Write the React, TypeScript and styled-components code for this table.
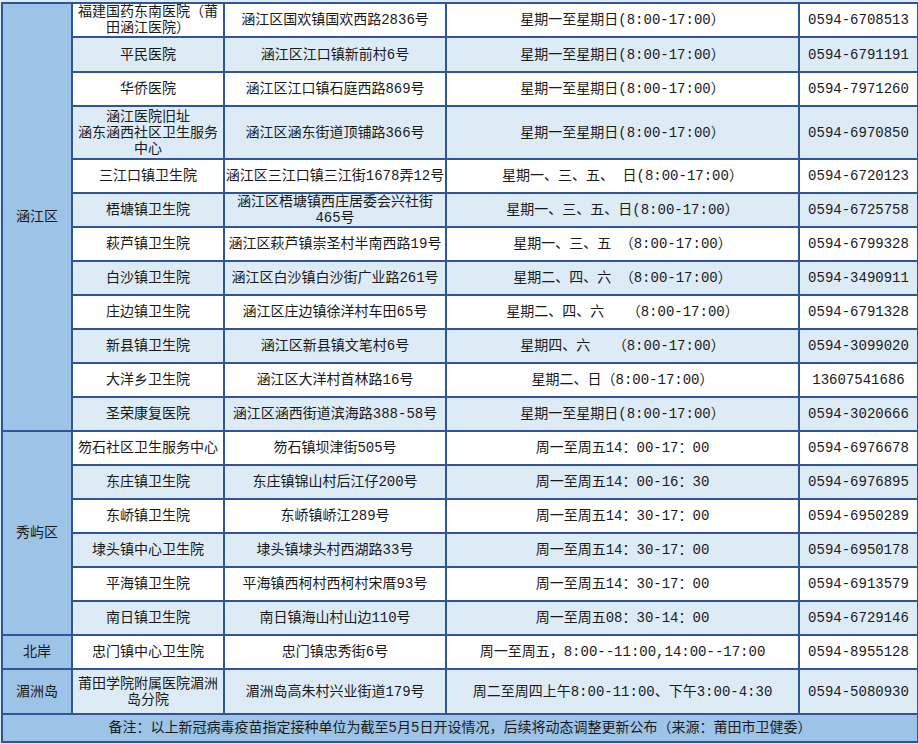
import React from "react";
import styled, { createGlobalStyle } from "styled-components";

interface Site {
  name: React.ReactNode;
  address: React.ReactNode;
  hours: string;
  phone: string;
  h?: number;
}

interface District {
  name: string;
  sites: Site[];
}

const DAILY = "星期一至星期日(8:00-17:00）";

const COLUMNS = [70, 152, 222, 353, 119];

const DISTRICTS: District[] = [
  {
    name: "涵江区",
    sites: [
      {
        name: (
          <>
            福建国药东南医院（莆
            <br />
            田涵江医院）
          </>
        ),
        address: "涵江区国欢镇国欢西路2836号",
        hours: DAILY,
        phone: "0594-6708513",
      },
      { name: "平民医院", address: "涵江区江口镇新前村6号", hours: DAILY, phone: "0594-6791191", h: 35 },
      { name: "华侨医院", address: "涵江区江口镇石庭西路869号", hours: DAILY, phone: "0594-7971260" },
      {
        name: (
          <>
            涵江医院旧址
            <br />
            涵东涵西社区卫生服务
            <br />
            中心
          </>
        ),
        address: "涵江区涵东街道顶铺路366号",
        hours: DAILY,
        phone: "0594-6970850",
        h: 53,
      },
      { name: "三江口镇卫生院", address: "涵江区三江口镇三江街1678弄12号", hours: "星期一、三、五、 日(8:00-17:00）", phone: "0594-6720123" },
      {
        name: "梧塘镇卫生院",
        address: (
          <>
            涵江区梧塘镇西庄居委会兴社街
            <br />
            465号
          </>
        ),
        hours: "星期一、三、五、日(8:00-17:00）",
        phone: "0594-6725758",
      },
      { name: "萩芦镇卫生院", address: "涵江区萩芦镇崇圣村半南西路19号", hours: "星期一、三、五 （8:00-17:00）", phone: "0594-6799328" },
      { name: "白沙镇卫生院", address: "涵江区白沙镇白沙街广业路261号", hours: "星期二、四、六 （8:00-17:00）", phone: "0594-3490911" },
      { name: "庄边镇卫生院", address: "涵江区庄边镇徐洋村车田65号", hours: "星期二、四、六　 （8:00-17:00）", phone: "0594-6791328" },
      { name: "新县镇卫生院", address: "涵江区新县镇文笔村6号", hours: "星期四、六　 （8:00-17:00）", phone: "0594-3099020" },
      { name: "大洋乡卫生院", address: "涵江区大洋村首林路16号", hours: "星期二、日（8:00-17:00）", phone: "13607541686" },
      { name: "圣荣康复医院", address: "涵江区涵西街道滨海路388-58号", hours: DAILY, phone: "0594-3020666" },
    ],
  },
  {
    name: "秀屿区",
    sites: [
      { name: "笏石社区卫生服务中心", address: "笏石镇坝津街505号", hours: "周一至周五14：00-17：00", phone: "0594-6976678" },
      { name: "东庄镇卫生院", address: "东庄镇锦山村后江仔200号", hours: "周一至周五14：00-16：30", phone: "0594-6976895" },
      { name: "东峤镇卫生院", address: "东峤镇峤江289号", hours: "周一至周五14：30-17：00", phone: "0594-6950289" },
      { name: "埭头镇中心卫生院", address: "埭头镇埭头村西湖路33号", hours: "周一至周五14：30-17：00", phone: "0594-6950178" },
      { name: "平海镇卫生院", address: "平海镇西柯村西柯村宋厝93号", hours: "周一至周五14：30-17：00", phone: "0594-6913579" },
      { name: "南日镇卫生院", address: "南日镇海山村山边110号", hours: "周一至周五08：30-14：00", phone: "0594-6729146" },
    ],
  },
  {
    name: "北岸",
    sites: [
      { name: "忠门镇中心卫生院", address: "忠门镇忠秀街6号", hours: "周一至周五，8:00--11:00,14:00--17:00", phone: "0594-8955128" },
    ],
  },
  {
    name: "湄洲岛",
    sites: [
      {
        name: (
          <>
            莆田学院附属医院湄洲
            <br />
            岛分院
          </>
        ),
        address: "湄洲岛高朱村兴业街道179号",
        hours: "周二至周四上午8:00-11:00、下午3:00-4:30",
        phone: "0594-5080930",
        h: 45,
      },
    ],
  },
];

const GlobalStyle = createGlobalStyle`
  html, body {
    margin: 0;
    padding: 0;
    background: #ffffff;
  }
`;

const Page = styled.div`
  width: 918px;
  height: 744px;
  overflow: hidden;
  padding: 2px 1px 0 1px;
  box-sizing: border-box;
  background: #ddebf7;
`;

const Table = styled.table`
  width: 916px;
  border-collapse: collapse;
  table-layout: fixed;
  font-family: "Liberation Mono", "Noto Sans CJK SC", monospace;
  font-size: 14px;
  line-height: 16px;
  color: #1a1a1a;
`;

const Col = styled.col<{ $w: number }>`
  width: ${(p) => p.$w}px;
`;

const Row = styled.tr<{ $shade: boolean; $h: number }>`
  height: ${(p) => p.$h}px;
  background: ${(p) => (p.$shade ? "#ddebf7" : "#ffffff")};
`;

const Cell = styled.td`
  box-sizing: border-box;
  border: 2px solid #2f5597;
  padding: 0;
  text-align: center;
  vertical-align: middle;
  white-space: nowrap;
`;

const DistrictCell = styled(Cell)`
  background: #9dc3e6;
`;

const NoteRow = styled.tr`
  height: 28px;
  background: #9dc3e6;
`;

export default function App() {
  let index = 0;
  return (
    <>
      <GlobalStyle />
      <Page>
        <Table>
          <colgroup>
            {COLUMNS.map((w, i) => (
              <Col key={i} $w={w} />
            ))}
          </colgroup>
          <tbody>
            {DISTRICTS.map((d) =>
              d.sites.map((s, i) => {
                const shade = index % 2 === 1;
                index += 1;
                return (
                  <Row key={`${d.name}-${i}`} $shade={shade} $h={s.h ?? 34}>
                    {i === 0 && <DistrictCell rowSpan={d.sites.length}>{d.name}</DistrictCell>}
                    <Cell>{s.name}</Cell>
                    <Cell>{s.address}</Cell>
                    <Cell>{s.hours}</Cell>
                    <Cell>{s.phone}</Cell>
                  </Row>
                );
              })
            )}
            <NoteRow>
              <Cell colSpan={5}>
                备注：以上新冠病毒疫苗指定接种单位为截至5月5日开设情况，后续将动态调整更新公布（来源：莆田市卫健委）
              </Cell>
            </NoteRow>
          </tbody>
        </Table>
      </Page>
    </>
  );
}
